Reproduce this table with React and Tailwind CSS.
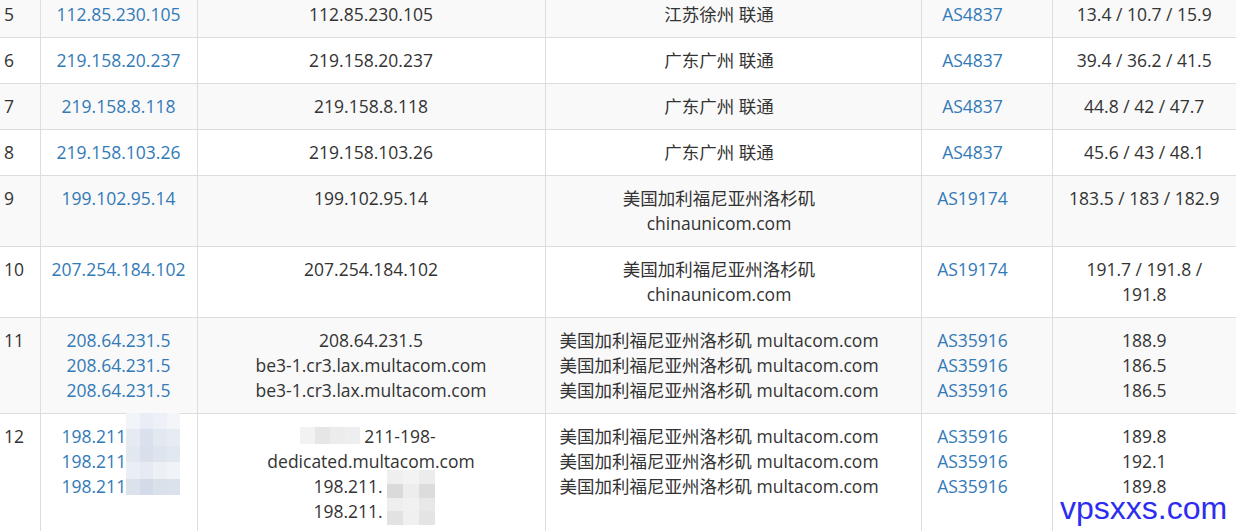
import React from 'react';

const rows = [
  { hop: '5', ips: ['112.85.230.105'], hosts: ['112.85.230.105'], locs: ['江苏徐州 联通'], asns: ['AS4837'], rtt: ['13.4 / 10.7 / 15.9'] },
  { hop: '6', ips: ['219.158.20.237'], hosts: ['219.158.20.237'], locs: ['广东广州 联通'], asns: ['AS4837'], rtt: ['39.4 / 36.2 / 41.5'] },
  { hop: '7', ips: ['219.158.8.118'], hosts: ['219.158.8.118'], locs: ['广东广州 联通'], asns: ['AS4837'], rtt: ['44.8 / 42 / 47.7'] },
  { hop: '8', ips: ['219.158.103.26'], hosts: ['219.158.103.26'], locs: ['广东广州 联通'], asns: ['AS4837'], rtt: ['45.6 / 43 / 48.1'] },
  { hop: '9', ips: ['199.102.95.14'], hosts: ['199.102.95.14'], locs: ['美国加利福尼亚州洛杉矶', 'chinaunicom.com'], asns: ['AS19174'], rtt: ['183.5 / 183 / 182.9'] },
  { hop: '10', ips: ['207.254.184.102'], hosts: ['207.254.184.102'], locs: ['美国加利福尼亚州洛杉矶', 'chinaunicom.com'], asns: ['AS19174'], rtt: ['191.7 / 191.8 / 191.8'] },
  {
    hop: '11',
    ips: ['208.64.231.5', '208.64.231.5', '208.64.231.5'],
    hosts: ['208.64.231.5', 'be3-1.cr3.lax.multacom.com', 'be3-1.cr3.lax.multacom.com'],
    locs: ['美国加利福尼亚州洛杉矶 multacom.com', '美国加利福尼亚州洛杉矶 multacom.com', '美国加利福尼亚州洛杉矶 multacom.com'],
    asns: ['AS35916', 'AS35916', 'AS35916'],
    rtt: ['188.9', '186.5', '186.5'],
  },
];

const lastRow = {
  locs: ['美国加利福尼亚州洛杉矶 multacom.com', '美国加利福尼亚州洛杉矶 multacom.com', '美国加利福尼亚州洛杉矶 multacom.com'],
  asns: ['AS35916', 'AS35916', 'AS35916'],
  rtt: ['189.8', '192.1', '189.8'],
};

const Lines = ({ items }) => items.map((t, i) => <div key={i}>{t}</div>);

// pixelated mosaic patch used to hide parts of addresses
const Mosaic = ({ className, cells, cols }) => (
  <div className={`absolute grid ${className}`} style={{ gridTemplateColumns: `repeat(${cols}, 1fr)` }}>
    {cells.map((c, i) => (
      <div key={i} style={{ background: c }} />
    ))}
  </div>
);

const cell = 'border-t border-l border-[#dddddd] py-[10px] align-top';

export default function App() {
  return (
    <div
      className="relative w-[1236px] h-[531px] overflow-hidden bg-white text-[#333333] text-[17.5px] leading-[25px]"
      style={{ fontFamily: '"Open Sans", "Noto Sans CJK SC", sans-serif' }}
    >
      <table className="-mt-[9px] w-[1236px] table-fixed border-collapse">
        <colgroup>
          <col className="w-[40px]" />
          <col className="w-[157px]" />
          <col className="w-[348px]" />
          <col className="w-[376px]" />
          <col className="w-[131px]" />
          <col className="w-[184px]" />
        </colgroup>
        <tbody>
          {rows.map((r, i) => (
            <tr key={r.hop} className={i % 2 === 0 ? 'bg-[#f9f9f9]' : 'bg-white'}>
              <td className="border-t border-[#dddddd] py-[10px] pl-[4px] align-top">{r.hop}</td>
              <td className={`${cell} text-center text-[#337ab7]`}><Lines items={r.ips} /></td>
              <td className={`${cell} text-center`}><Lines items={r.hosts} /></td>
              <td className={`${cell} pl-[8px] pr-[36px] text-center`}><Lines items={r.locs} /></td>
              <td className={`${cell} pl-[8px] pr-[36px] text-center text-[#337ab7]`}><Lines items={r.asns} /></td>
              <td className={`${cell} px-[14px] text-center`}><Lines items={r.rtt} /></td>
            </tr>
          ))}
          <tr className="bg-white">
            <td className="border-t border-[#dddddd] py-[10px] pl-[4px] align-top">12</td>
            <td className={`${cell} text-[#337ab7]`}>
              <div className="pl-[21px]">
                <div>198.211.</div>
                <div>198.211.</div>
                <div>198.211.</div>
              </div>
            </td>
            <td className={`${cell} text-center`}>
              <div><span className="inline-block w-[58px]" />211-198-</div>
              <div>dedicated.multacom.com</div>
              <div>198.211.<span className="inline-block w-[46px]" /></div>
              <div>198.211.<span className="inline-block w-[46px]" /></div>
            </td>
            <td className={`${cell} pl-[8px] pr-[36px] text-center`}><Lines items={lastRow.locs} /></td>
            <td className={`${cell} pl-[8px] pr-[36px] text-center text-[#337ab7]`}><Lines items={lastRow.asns} /></td>
            <td className={`${cell} px-[14px] text-center`}><Lines items={lastRow.rtt} /></td>
          </tr>
        </tbody>
      </table>

      <Mosaic
        className="left-[126px] top-[413px] w-[54px] h-[82px] rounded-tl-[20px]"
        cols={4}
        cells={[
          '#f1f4f9', '#e9eef6', '#edf1f7', '#f3f5f9',
          '#e6ebf3', '#dae1ec', '#e3e9f1', '#e7ecf3',
          '#e2e8f0', '#d9e0eb', '#dfe5ee', '#e2e8f0',
          '#eaeef5', '#e6ebf3', '#edf1f6', '#f0f3f8',
          '#dbe2ec', '#d2dbe7', '#dae1eb', '#dbe2ec',
        ]}
      />
      <Mosaic
        className="left-[300px] top-[427px] w-[60px] h-[17px] rounded-r-[8px]"
        cols={4}
        cells={['#f2f2f2', '#e6e6e6', '#ececec', '#eeeeee']}
      />
      <Mosaic
        className="left-[387px] top-[470px] w-[48px] h-[55px] rounded-t-[10px]"
        cols={3}
        cells={[
          '#efefef', '#f3f3f3', '#ececec',
          '#dadada', '#ededed', '#dcdcdc',
          '#eeeeee', '#f1f1f1', '#e8e8e8',
          '#e2e2e2', '#f0f0f0', '#e4e4e4',
        ]}
      />

      <div
        className="absolute left-[1060px] top-[490px] text-[32px] leading-[36px] text-[#2d2df2]"
        style={{ fontFamily: '"Liberation Sans", Arial, sans-serif' }}
      >
        vpsxxs.com
      </div>
    </div>
  );
}
